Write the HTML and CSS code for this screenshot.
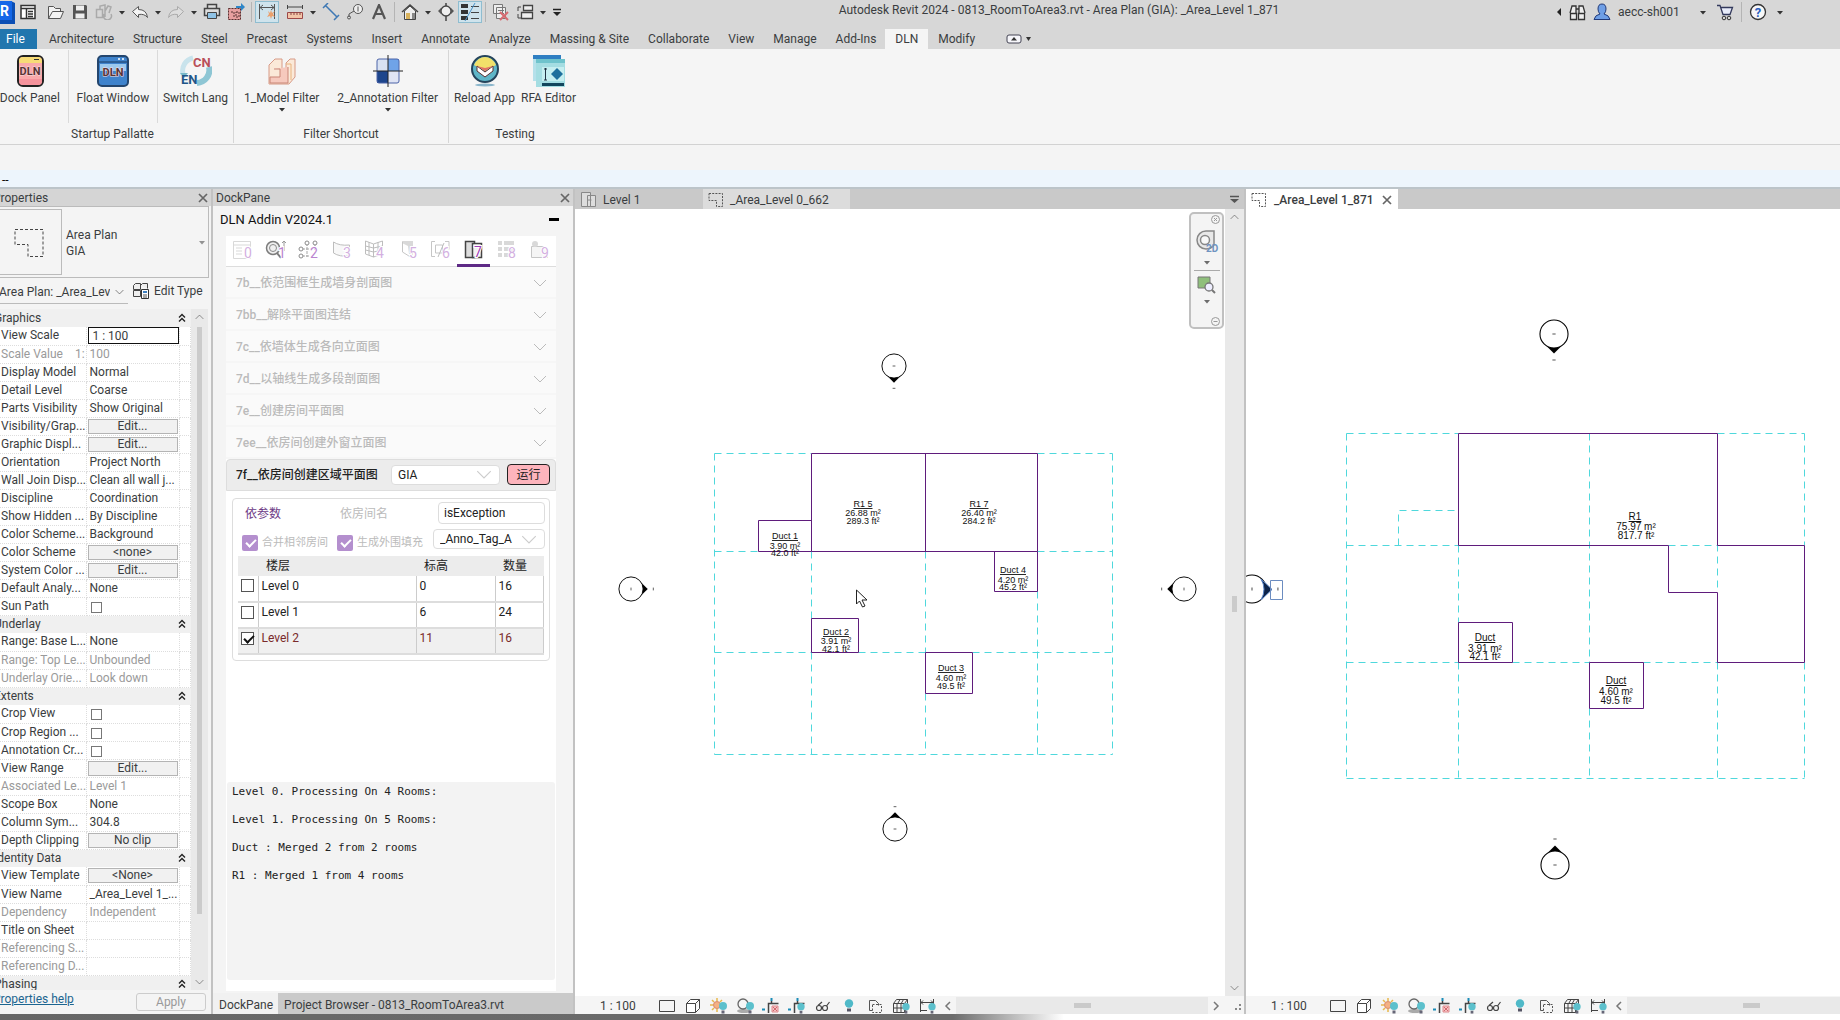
FILE: index.html
```html
<!DOCTYPE html>
<html lang="en">
<head>
    <meta charset="utf-8">
    <title>Autodesk Revit 2024 - 0813_RoomToArea3.rvt</title>
    <link rel="stylesheet" href="styles.css">
</head>
<body>
<!-- shared symbols -->
<svg class="defs" width="0" height="0">
    <symbol id="down" viewBox="0 0 8 5"><path d="M1 1h6L4 4.500z" fill="#333"/></symbol>
    <symbol id="chev" viewBox="0 0 14 8"><path d="M1 1l6 6 6-6" fill="none" stroke="currentColor"/></symbol>
    <symbol id="cross" viewBox="0 0 12 12"><path d="M2 2l8 8M10 2l-8 8" stroke="#666" stroke-width="1.700"/></symbol>
    <symbol id="fold" viewBox="0 0 8 10"><path d="M1 4.500l3-3 3 3M1 8.500l3-3 3 3" fill="none" stroke="#222" stroke-width="1.400"/></symbol>
    <symbol id="areaplan" viewBox="0 0 16 16"><path d="M1 1.500h13.500v13H8.500v-6H1z" fill="none" stroke="#555" stroke-dasharray="2 1.200"/></symbol>
    <symbol id="bulb" viewBox="0 0 8 12"><circle cx="4" cy="4" r="4" fill="#5cc0cc"/><path d="M2.500 8.500h3v3h-3z" fill="#667"/></symbol>
    <symbol id="v-box" viewBox="0 0 18 16"><path d="M1.500 2.500h15v11h-15z" fill="none" stroke="#444"/></symbol>
    <symbol id="v-cube" viewBox="0 0 18 16"><path d="M2.500 5.500h9v9h-9zM2.500 5.500l4-4h9l-4 4M15.500 1.500v9l-4 4" fill="#fff" stroke="#444"/></symbol>
    <symbol id="v-sun" viewBox="0 0 18 16"><path d="M7 0v3M7 11v3M0 7h3M2 2l2 2M2 12l2-2M12 2l-2 2" stroke="#e8b84c" stroke-width="1.500"/><circle cx="7" cy="7" r="3.500" fill="#f4b183" stroke="#d98a6a"/><use href="#bulb" x="9" y="4" width="8" height="12"/></symbol>
    <symbol id="v-shadow" viewBox="0 0 18 16"><ellipse cx="8" cy="13" rx="7" ry="2" fill="#aaa"/><circle cx="7" cy="6" r="5" fill="#f6f6f6" stroke="#666" stroke-width="1.300"/><use href="#bulb" x="10" y="4" width="8" height="12"/></symbol>
    <symbol id="v-crop" viewBox="0 0 18 16"><path d="M9.500 0v3M0 11.500h3" stroke="#1b8cb8" stroke-width="2"/><path d="M6.500 15v-9.500h10M9.500 3v3" fill="none" stroke="#444" stroke-width="1.500"/><path d="M10 8h6v6h-6z" fill="#f6c3c3" stroke="#e08a8e"/><path d="M11 9l4 4M15 9l-4 4" stroke="#d0686e"/></symbol>
    <symbol id="v-region" viewBox="0 0 18 16"><path d="M9.500 0v3M0 11.500h3" stroke="#1b8cb8" stroke-width="2"/><path d="M6.500 15v-9.500h10M9.500 3v3" fill="none" stroke="#444" stroke-width="1.500"/><use href="#bulb" x="9" y="5" width="8" height="11"/></symbol>
    <symbol id="v-glasses" viewBox="0 0 18 16"><g fill="none" stroke="#444" stroke-width="1.200"><circle cx="5" cy="10" r="2.500"/><circle cx="11" cy="10" r="2.500"/><path d="M4 7.500l4-3.500M12.500 8l3-4M7.500 9.500h1"/></g></symbol>
    <symbol id="v-bulb" viewBox="0 0 18 16"><circle cx="9" cy="5.500" r="4.200" fill="#4fb9c8"/><path d="M7 10.500h4v3h-4z" fill="#556"/></symbol>
    <symbol id="v-copy" viewBox="0 0 18 16"><path d="M3.500 12.500v-10h6l3 3v2M3.500 12.500h3" fill="none" stroke="#555"/><path d="M6.500 6.500h9v8h-9z" fill="none" stroke="#555" stroke-dasharray="2 1.500"/></symbol>
    <symbol id="v-grid" viewBox="0 0 18 16"><path d="M1.500 5.500h11v9h-11zM1.500 5.500l3-4h11l-3 4M15.500 1.500v8l-3 5M5 5.500v9M9 5.500v9M1.500 10h11M6 5l2-3.500M9.500 5l2-3.500" fill="none" stroke="#444"/><use href="#bulb" x="10" y="5" width="8" height="11"/></symbol>
    <symbol id="v-dim" viewBox="0 0 18 16"><path d="M2.500 1v13M15.500 1v5M2.500 4.500h13M5 2.500l-2 2 2 2M13 2.500l2 2-2 2M2 12.500h7" fill="none" stroke="#444"/><use href="#bulb" x="10" y="5" width="8" height="11"/></symbol>
    <!-- elevation mark pointing down, the other three are rotated -->
    <symbol id="mark" viewBox="-20 -20 40 50" overflow="visible"><path d="M-9 9L0 18 9 9z" fill="#000"/><circle r="13" fill="#fff" stroke="#000"/><path d="M-1.500 0h3M-1.500 24h3" stroke="#555"/></symbol>
</svg>

<div class="window">
    <header class="titlebar">
        <div class="quick">
            <svg class="logo" width="24" height="26" viewBox="0 0 24 26"><path d="M0 2h19l4 2v21H0z" fill="#0c4fb4"/><path d="M0 2h20v19H0z" fill="#1467e8"/><text x="8" y="17">R</text></svg>
            <button class="tool"><svg width="16" height="16"><path d="M1 1.500h14v13H1zM1 4.500h14M6.500 4v10M8 7.500h5M8 10h5M8 12.500h5" fill="#fff" stroke="#333" stroke-width="1.500"/></svg></button>
            <span class="gap"></span>
            <button class="tool"><svg width="18" height="16"><path d="M1.500 14.500v-12h5l2 2h5v3M1.500 14.500l4-7h11l-3 7z" fill="#f2f2f2" stroke="#555"/></svg></button>
            <button class="tool"><svg width="16" height="16"><path d="M1 1h13l1 1v13H1z" fill="#555"/><path d="M4 1.500h8v5H4zM3.500 9.500h9v5h-9z" fill="#eee"/></svg></button>
            <button class="tool"><svg width="18" height="16"><path d="M1.500 5.500h6v8h-6zM5 5V2l5-1v12M10 7l3-5 3 1-2 6M9 10a4 4 0 1 0 7 0" fill="none" stroke="#aaa" stroke-width="1.500"/></svg></button>
            <svg class="arrow"><use href="#down"/></svg>
            <button class="tool"><svg width="18" height="14"><path d="M1.500 6.500l6-5v3q8 0 9 8q-3-4-9-3v3z" fill="#f4f4f4" stroke="#555"/></svg></button>
            <svg class="arrow"><use href="#down"/></svg>
            <button class="tool"><svg width="18" height="14"><path d="M16.500 6.500l-6-5v3q-8 0-9 8q3-4 9-3v3z" fill="#ddd" stroke="#aaa"/></svg></button>
            <svg class="arrow"><use href="#down"/></svg>
            <button class="tool"><svg width="18" height="18"><path d="M4.500 1.500h9v4h-9zM1.500 5.500h15v7h-15z" fill="#ddd" stroke="#444" stroke-width="1.500"/><path d="M4.500 9.500h9v6h-9z" fill="#8fc3e6" stroke="#444"/></svg></button>
            <button class="tool"><svg width="18" height="18"><path d="M1 5h13v12H1z" fill="#e7a0a0"/><path d="M1.500 5.500h12v11h-12zM4 9h3v5M9 9h3v5H9z" fill="none" stroke="#533" stroke-dasharray="2 1"/><path d="M9 3h5V0l4 4-4 4V5H9z" fill="#2e86c8"/></svg></button>
            <span class="sep"></span>
            <button class="tool on"><svg width="18" height="20"><path d="M1.500 2v15M16.500 2v15M2 5.500h14M5 3L2 5.500 5 8M13 3l3 2.500L13 8" fill="none" stroke="#555"/><path d="M10 9l2 2 1-3 1 3 3-2-2 3 2 3-3-1-1 3-1-3-3 1 2-3z" fill="#eba06c"/></svg></button>
            <span class="gap"></span>
            <button class="tool"><svg width="18" height="16"><path d="M1.500 1v4M16.500 1v4M2 3h14" stroke="#444"/><path d="M1.500 8.500h15v6h-15z" fill="#f3c5a8" stroke="#9d4848"/><path d="M5 8v3M8 8v3M11 8v3M14 8v3" stroke="#844"/></svg></button>
            <svg class="arrow"><use href="#down"/></svg>
            <button class="tool"><svg width="18" height="18"><path d="M3.500 2.500l12 12M1 5l5-5M12 17l5-5" stroke="#3e78b4" stroke-width="1.500"/></svg></button>
            <button class="tool"><svg width="18" height="18"><circle cx="12" cy="6" r="4.500" fill="#eee" stroke="#555"/><path d="M12 3.500v5M8 8l-5 3v3" fill="none" stroke="#555"/><circle cx="3" cy="14.500" r="1.500" fill="none" stroke="#555"/></svg></button>
            <button class="tool"><svg width="16" height="16"><path d="M2 15L8 1l6 14M4.500 10h7" fill="none" stroke="#555" stroke-width="2.200"/></svg></button>
            <span class="sep"></span>
            <button class="tool"><svg width="18" height="18"><path d="M1 9l8-7 8 7" fill="none" stroke="#444" stroke-width="1.500"/><path d="M3.500 8v8.500h11V8L9 3z" fill="#eee" stroke="#444"/><path d="M5 10h4v6H5z" fill="#d8b25c"/><path d="M11 10h3v6h-3z" fill="#888"/></svg></button>
            <svg class="arrow"><use href="#down"/></svg>
            <button class="tool"><svg width="16" height="18"><circle cx="8" cy="8" r="5" fill="#eee" stroke="#444" stroke-width="1.300"/><path d="M8 0v3M8 13v5" stroke="#444" stroke-width="1.500"/><path d="M3 5L0 8l3 3zM13 5l3 3-3 3z" fill="#555"/></svg></button>
            <button class="tool on"><svg width="20" height="18"><path d="M1 3h7M1 9h7M1 15h7" stroke="#333" stroke-width="4"/><path d="M11 3.500h8M11 9.500h8M11 15.500h8" stroke="#444"/><path d="M15 0L5 18" stroke="#4a93c8"/></svg></button>
            <span class="sep"></span>
            <button class="tool"><svg width="18" height="18"><path d="M1.500 1.500h9v9h-9zM4.500 4.500h9v11h-9z" fill="#eee" stroke="#777"/><path d="M6 7.500h6M6 10.500h6" stroke="#777"/><path d="M8 9l8 8M16 9l-8 8" stroke="#d76a70" stroke-width="2"/></svg></button>
            <button class="tool"><svg width="18" height="18"><path d="M7.500 2.500h9v5h-9zM5.500 9.500h11v6h-11z" fill="#eee" stroke="#444" stroke-width="1.300"/><path d="M5 4H2v4M2 11v4h3" fill="none" stroke="#444"/></svg></button>
            <svg class="arrow"><use href="#down"/></svg>
            <svg class="more" width="10" height="9"><path d="M1 1.500h8" stroke="#222" stroke-width="1.500"/><path d="M1 4h8L5 8z" fill="#222"/></svg>
        </div>
        <div class="caption">Autodesk Revit 2024 - 0813_RoomToArea3.rvt - Area Plan (GIA): _Area_Level 1_871</div>
        <div class="account">
            <svg width="6" height="8"><path d="M5 0v8L1 4z" fill="#222"/></svg>
            <svg width="17" height="17"><path d="M1 9l2-7h4v8M16 9l-2-7h-4v8M7 5h3M1.500 9.500h6v6h-6zM9.500 9.500h6v6h-6z" fill="#eee" stroke="#333" stroke-width="1.300"/></svg>
            <svg width="18" height="18"><path d="M9 1q4 0 4 5 0 3-2 5 5 1 6 5.500H1Q2 12 7 11 5 9 5 6q0-5 4-5z" fill="#6f9fe6" stroke="#223a78"/></svg>
            <span class="user">aecc-sh001</span>
            <svg class="arrow"><use href="#down"/></svg>
            <svg width="18" height="17"><path d="M1 1.500h3l3 9h7l2.500-7H5" fill="#e8ecfa" stroke="#33395c" stroke-width="1.300"/><circle cx="8" cy="14" r="1.800" fill="none" stroke="#333"/><circle cx="13" cy="14" r="1.800" fill="none" stroke="#333"/></svg>
            <span class="sep"></span>
            <svg width="18" height="18"><circle cx="9" cy="9" r="7.500" fill="#f8f8f8" stroke="#333" stroke-width="1.300"/><text class="help" x="9" y="14">?</text></svg>
            <svg class="arrow"><use href="#down"/></svg>
        </div>
    </header>

    <nav class="tabs">
        <a class="file" href="#">File</a>
        <a href="#">Architecture</a>
        <a href="#">Structure</a>
        <a href="#">Steel</a>
        <a href="#">Precast</a>
        <a href="#">Systems</a>
        <a href="#">Insert</a>
        <a href="#">Annotate</a>
        <a href="#">Analyze</a>
        <a href="#">Massing &amp; Site</a>
        <a href="#">Collaborate</a>
        <a href="#">View</a>
        <a href="#">Manage</a>
        <a href="#">Add-Ins</a>
        <a class="current" href="#">DLN</a>
        <a href="#">Modify</a>
        <svg class="toggle" width="26" height="10"><rect x="1" y="1" width="14" height="8" rx="2" fill="#f6f6fa" stroke="#445"/><path d="M5 6.500h6L8 3z" fill="#333"/><path d="M20 3h5l-2.500 4z" fill="#333"/></svg>
    </nav>

    <div class="ribbon">
        <section class="group startup">
            <div class="commands">
                <button><svg width="32" height="32"><rect x="4" y="1" width="25" height="30" rx="5" fill="#f9a9ab" stroke="#222" stroke-width="2"/><path d="M5 6q0-4 4-4h15q4 0 4 4v2H5z" fill="#f7dc77"/><path d="M20 4.500h5" stroke="#333"/><path d="M5 24h23v2q0 4-4 4H9q-4 0-4-4z" fill="#f5939c"/><text class="dln" x="16" y="20">DLN</text></svg>Dock Panel</button>
                <button><svg width="32" height="32"><rect x="1" y="1" width="30" height="30" rx="4" fill="#3f83cc" stroke="#24466e" stroke-width="2"/><path d="M2 7h28" stroke="#1d3a5e"/><path d="M3 9h26v7H3z" fill="#9cc9ee"/><circle cx="26" cy="4" r="1" fill="#fff"/><circle cx="22" cy="4" r="1" fill="#fff"/><text class="dln" x="16" y="21">DLN</text></svg>Float Window</button>
                <button><svg width="32" height="32"><path d="M13 3A13 13 0 0 0 3 19" fill="none" stroke="#c9e3ec" stroke-width="5"/><path d="M29 12A13 13 0 0 1 17 28" fill="none" stroke="#8ec6d4" stroke-width="6"/><path d="M0 18l4 5 4-5z" fill="#78b8c8"/><text class="cn" x="13" y="12">CN</text><text class="en" x="1" y="29">EN</text></svg>Switch Lang</button>
            </div>
            <h2>Startup Pallatte</h2>
        </section>
        <section class="group filter">
            <div class="commands">
                <button><svg width="32" height="32"><path d="M3 10l6-6h7v17h4V8l4-4h5v18l-6 7H3z" fill="#fbe9d8" stroke="#d79a86"/><path d="M8 14h6v8H4v6h18V12" fill="#f6c9bd" stroke="#c98577"/><path d="M20 9h5v16" fill="none" stroke="#e8b47f"/></svg>1_Model Filter<svg class="arrow"><use href="#down"/></svg></button>
                <button><svg width="32" height="32"><path d="M5 4h11v12H5z" fill="#d9e2f2"/><path d="M16 4h11v12H16z" fill="#6fa3e8"/><path d="M5 16h11v12H5z" fill="#1d458c"/><path d="M16 16h11v12H16z" fill="#dfe4f4"/><rect x="5" y="4" width="22" height="24" rx="2" fill="none" stroke="#4d64a8"/><path d="M16 0v32M1 16h30" stroke="#222"/></svg>2_Annotation Filter<svg class="arrow"><use href="#down"/></svg></button>
            </div>
            <h2>Filter Shortcut</h2>
        </section>
        <section class="group testing">
            <div class="commands">
                <button><svg width="32" height="32"><ellipse cx="16" cy="30" rx="10" ry="1.500" fill="#8ab6cc"/><circle cx="16" cy="14" r="13" fill="#5fb6c8" stroke="#25445c" stroke-width="2"/><path d="M5 10q4-8 11-8t11 8l-11 6z" fill="#f2e06a"/><path d="M8 11l8 6 8-6v5l-8 6-8-6z" fill="#fff" stroke="#5a3030"/><path d="M8 11l8 5 8-5-8 2z" fill="#e07066"/></svg>Reload App</button>
                <button><svg width="32" height="32"><path d="M0 0h28v26H0z" fill="#b5e0ea"/><path d="M0 0h28v4H0z" fill="#2f7fc2"/><path d="M3 4h29v28H3z" fill="#a4dde2"/><path d="M3 4h29v4H3z" fill="#6fc3cc"/><path d="M9 12h22v14H9z" fill="#c5eef0"/><path d="M12.500 13v12M11 14h3M11 25h3" stroke="#234"/><path d="M24 13l6 6-6 6-6-6z" fill="#1d6f9c"/><path d="M9 28h22v3H9z" fill="#12455c"/></svg>RFA Editor</button>
            </div>
            <h2>Testing</h2>
        </section>
    </div>
    <div class="options"></div>
    <div class="contextbar">--</div>

    <main class="workspace">
        <section class="properties">
            <h3 class="panehead">Properties<svg width="12" height="12"><use href="#cross"/></svg></h3>
            <div class="typebox">
                <div class="thumb"><svg width="30" height="30"><path d="M1 1.500h28v27H14v-12H1z" fill="none" stroke="#444" stroke-dasharray="3 2"/></svg></div>
                <div class="typename">Area Plan<br>GIA</div>
                <svg class="arrow"><use href="#down"/></svg>
            </div>
            <div class="instance">
                <span class="picker"><select aria-label="View"><option>Area Plan: _Area_Level</option></select><svg width="9" height="6"><use href="#chev"/></svg></span>
                <button class="edittype"><svg width="18" height="18"><path d="M1.500 3.500l2-2h5v6h-7zM8.500 3.500l2-2h5v5M1.500 8.500h7v6h-7z" fill="#eee" stroke="#444"/><path d="M9.500 7.500h7v9h-7z" fill="#fff" stroke="#333"/><path d="M11 9h4v2h-4z" fill="#3d7fc0"/><path d="M11 13h4M11 15h4" stroke="#555"/></svg>Edit Type</button>
            </div>
            <div class="gridarea">
                <table class="props">
                    <colgroup><col class="c1"><col class="c2"><col class="c3"></colgroup>
                    <tr class="cat"><th colspan="3">Graphics<svg width="8" height="10"><use href="#fold"/></svg></th></tr>
                    <tr><td><label for="vscale">View Scale</label></td><td class="ctl"><input id="vscale" type="text" value="1 : 100"></td><td></td></tr>
                    <tr class="off"><td>Scale Value &nbsp;&nbsp; 1:</td><td>100</td><td></td></tr>
                    <tr><td>Display Model</td><td>Normal</td><td></td></tr>
                    <tr><td>Detail Level</td><td>Coarse</td><td></td></tr>
                    <tr><td>Parts Visibility</td><td>Show Original</td><td></td></tr>
                    <tr><td>Visibility/Grap...</td><td class="ctl"><button>Edit...</button></td><td></td></tr>
                    <tr><td>Graphic Displ...</td><td class="ctl"><button>Edit...</button></td><td></td></tr>
                    <tr><td>Orientation</td><td>Project North</td><td></td></tr>
                    <tr><td>Wall Join Disp...</td><td>Clean all wall j...</td><td></td></tr>
                    <tr><td>Discipline</td><td>Coordination</td><td></td></tr>
                    <tr><td>Show Hidden ...</td><td>By Discipline</td><td></td></tr>
                    <tr><td>Color Scheme...</td><td>Background</td><td></td></tr>
                    <tr><td>Color Scheme</td><td class="ctl"><button>&lt;none&gt;</button></td><td></td></tr>
                    <tr><td>System Color ...</td><td class="ctl"><button>Edit...</button></td><td></td></tr>
                    <tr><td>Default Analy...</td><td>None</td><td></td></tr>
                    <tr><td><label for="sun">Sun Path</label></td><td class="ctl"><input id="sun" type="checkbox"></td><td></td></tr>
                    <tr class="cat"><th colspan="3">Underlay<svg width="8" height="10"><use href="#fold"/></svg></th></tr>
                    <tr><td>Range: Base L...</td><td>None</td><td></td></tr>
                    <tr class="off"><td>Range: Top Le...</td><td>Unbounded</td><td></td></tr>
                    <tr class="off"><td>Underlay Orie...</td><td>Look down</td><td></td></tr>
                    <tr class="cat"><th colspan="3">Extents<svg width="8" height="10"><use href="#fold"/></svg></th></tr>
                    <tr><td><label for="cropv">Crop View</label></td><td class="ctl"><input id="cropv" type="checkbox"></td><td></td></tr>
                    <tr><td><label for="cropr">Crop Region ...</label></td><td class="ctl"><input id="cropr" type="checkbox"></td><td></td></tr>
                    <tr><td><label for="cropa">Annotation Cr...</label></td><td class="ctl"><input id="cropa" type="checkbox"></td><td></td></tr>
                    <tr><td>View Range</td><td class="ctl"><button>Edit...</button></td><td></td></tr>
                    <tr class="off"><td>Associated Le...</td><td>Level 1</td><td></td></tr>
                    <tr><td>Scope Box</td><td>None</td><td></td></tr>
                    <tr><td>Column Sym...</td><td>304.8</td><td></td></tr>
                    <tr><td>Depth Clipping</td><td class="ctl"><button>No clip</button></td><td></td></tr>
                    <tr class="cat"><th colspan="3">Identity Data<svg width="8" height="10"><use href="#fold"/></svg></th></tr>
                    <tr><td>View Template</td><td class="ctl"><button>&lt;None&gt;</button></td><td></td></tr>
                    <tr><td>View Name</td><td>_Area_Level 1_...</td><td></td></tr>
                    <tr class="off"><td>Dependency</td><td>Independent</td><td></td></tr>
                    <tr><td>Title on Sheet</td><td></td><td></td></tr>
                    <tr class="off"><td>Referencing S...</td><td></td><td></td></tr>
                    <tr class="off"><td>Referencing D...</td><td></td><td></td></tr>
                    <tr class="cat"><th colspan="3">Phasing<svg width="8" height="10"><use href="#fold"/></svg></th></tr>
                </table>
                <div class="vscroll">
                    <svg class="up" width="9" height="6"><use href="#chev"/></svg>
                    <div class="rail"><i class="longthumb"></i></div>
                    <svg width="9" height="6"><use href="#chev"/></svg>
                </div>
            </div>
            <div class="propfoot"><a href="#">Properties help</a><button disabled>Apply</button></div>
        </section>

        <section class="dock">
            <h3 class="panehead">DockPane<svg width="12" height="12"><use href="#cross"/></svg></h3>
            <div class="addin"><span>DLN Addin V2024.1</span><i class="minus"></i></div>
            <div class="sheet">
                <div class="steps">
                    <button><svg width="22" height="20"><path d="M1.500 1.500h17v17h-17zM1.500 5h17M4 8h6M4 11h6M4 14h6" fill="none" stroke="#bbb"/><text x="12" y="18">0</text></svg></button>
                    <button class="mid"><svg width="22" height="20"><circle cx="8" cy="8" r="6.500" fill="#eee" stroke="#666" stroke-width="1.500"/><circle cx="8" cy="8" r="3.500" fill="none" stroke="#777"/><path d="M12 13l4 5" stroke="#666" stroke-width="2"/><path d="M19 1v10M17 3l2-2 2 2" fill="none" stroke="#888"/><text x="13" y="18">1</text></svg></button>
                    <button class="mid"><svg width="22" height="20"><path d="M4 9h14M4 16h8M9 3v14M17 3v8" stroke="#999" stroke-dasharray="3 1"/><g fill="#fff" stroke="#777"><circle cx="9" cy="3" r="2"/><circle cx="17" cy="3" r="2"/><circle cx="3" cy="9" r="2"/><circle cx="3" cy="16" r="2"/></g><text x="12" y="18">2</text></svg></button>
                    <button><svg width="22" height="20"><path d="M2.500 2q6 4 16 3v11q-10 1-16-3z" fill="#f4f4f4" stroke="#888"/><text x="12" y="18">3</text></svg></button>
                    <button><svg width="22" height="20"><path d="M1.500 1l8 3 9-3v13l-9 3-8-3zM9.500 4v13M5 2v13M14 2v13M1.500 6l8 2 9-2M1.500 10l8 2 9-2" fill="none" stroke="#888"/><text x="12" y="18">4</text></svg></button>
                    <button><svg width="22" height="20"><path d="M5 1h11v14l-4-1-1-8-6-3z" fill="#bbb"/><path d="M5.500 2v10l8 5" fill="none" stroke="#999"/><text x="12" y="18">5</text></svg></button>
                    <button><svg width="22" height="20"><path d="M5 1.500H1.500v15H5M15 1.500h4v8M5.500 5h7v8h-7z" fill="none" stroke="#999"/><path d="M14 3l-6 14" stroke="#888"/><text x="12" y="18">6</text></svg></button>
                    <button class="active"><svg width="22" height="20"><path d="M2.500 1.500h9v16h-9z" fill="#ddd" stroke="#444" stroke-width="1.500"/><path d="M9.500 3.500h9v14h-9z" fill="#f2f2f2" stroke="#444" stroke-width="1.500"/><text x="11" y="17">7</text></svg></button>
                    <button><svg width="22" height="20"><path d="M2 3h4M2 9h4M2 15h4M8 3h10M8 9h10M8 15h5" stroke="#bbb" stroke-width="4"/><text x="12" y="18">8</text></svg></button>
                    <button><svg width="22" height="20"><path d="M2.500 6.500h12l4 4v7h-16z" fill="#eee" stroke="#999"/><circle cx="6" cy="4" r="3" fill="#bbb"/><text x="12" y="18">9</text></svg></button>
                </div>
                <ul class="steplist">
                    <li>7b__依范围框生成墙身剖面图<svg width="14" height="8"><use href="#chev"/></svg></li>
                    <li>7bb__解除平面图连结<svg width="14" height="8"><use href="#chev"/></svg></li>
                    <li>7c__依墙体生成各向立面图<svg width="14" height="8"><use href="#chev"/></svg></li>
                    <li>7d__以轴线生成多段剖面图<svg width="14" height="8"><use href="#chev"/></svg></li>
                    <li>7e__创建房间平面图<svg width="14" height="8"><use href="#chev"/></svg></li>
                    <li>7ee__依房间创建外窗立面图<svg width="14" height="8"><use href="#chev"/></svg></li>
                </ul>
                <div class="open">
                    <strong>7f__依房间创建区域平面图</strong>
                    <span class="picker gia"><select aria-label="Area scheme"><option>GIA</option></select><svg width="16" height="9"><use href="#chev"/></svg></span>
                    <button class="run">运行</button>
                </div>
                <div class="card">
                    <div class="line">
                        <span class="mode picked">依参数</span>
                        <span class="mode">依房间名</span>
                        <input class="param" type="text" value="isException" aria-label="Parameter">
                    </div>
                    <div class="line">
                        <label><input type="checkbox" checked>合并相邻房间</label>
                        <label><input type="checkbox" checked>生成外围填充</label>
                        <span class="picker tag"><select aria-label="Tag"><option>_Anno_Tag_A</option></select><svg width="16" height="9"><use href="#chev"/></svg></span>
                    </div>
                    <table class="levels">
                        <colgroup><col class="l1"><col class="l2"><col class="l3"><col class="l4"></colgroup>
                        <tr><th></th><th>楼层</th><th>标高</th><th>数量</th></tr>
                        <tr><td><input type="checkbox" aria-label="Level 0"></td><td>Level 0</td><td>0</td><td>16</td></tr>
                        <tr><td><input type="checkbox" aria-label="Level 1"></td><td>Level 1</td><td>6</td><td>24</td></tr>
                        <tr class="picked"><td><input type="checkbox" aria-label="Level 2" checked></td><td>Level 2</td><td>11</td><td>16</td></tr>
                    </table>
                </div>
<pre class="log">Level 0. Processing On 4 Rooms:

Level 1. Processing On 5 Rooms:

Duct : Merged 2 from 2 rooms

R1 : Merged 1 from 4 rooms</pre>
            </div>
            <div class="docktabs"><a class="current" href="#">DockPane</a><a href="#">Project Browser - 0813_RoomToArea3.rvt</a></div>
        </section>

        <section class="view first">
            <div class="viewtabs">
                <a class="level" href="#"><svg width="17" height="17"><path d="M1.500 1.500h9v14h-9zM7.500 4.500h8v11h-8z" fill="#ddd" stroke="#888"/><path d="M7.500 9h4" stroke="#888"/></svg>Level 1</a>
                <a class="area" href="#"><svg width="16" height="16"><use href="#areaplan"/></svg>_Area_Level 0_662</a>
                <svg class="more" width="9" height="9"><path d="M0 1.500h9" stroke="#555" stroke-width="1.500"/><path d="M0 4h9l-4.500 4z" fill="#555"/></svg>
            </div>
            <div class="canvas">
                <svg class="drawing">
                    <!-- drawn in window coordinates -->
                    <g transform="translate(-575,-209)">
                        <path class="sep-line" d="M714.500 453.500h97M1037.500 453.500h75M714.500 453.500v301M1112.500 453.500v301M714.500 551.500h44M1037.500 551.500h75M811.500 551.500v67M811.500 652.500v102M925.500 551.500v101M925.500 693.500v61M1037.500 591.500v163M714.500 652.500h97M858.500 652.500h67M972.500 652.500h140M714.500 754.500h398"/>
                        <path class="room" d="M811.500 453.500h226v98h-226zM925.500 453.500v98M758.500 551.500v-31h53M758.500 551.500h53M994.500 551.500v40h43v-40M811.500 652.500v-34h47v34zM925.500 652.500h47v41h-47z"/>
                        <g class="tag9">
                            <text class="name" x="863" y="507">R1 5</text><text x="863" y="516">26.88 m²</text><text x="863" y="524">289.3 ft²</text>
                            <text class="name" x="979" y="507">R1 7</text><text x="979" y="516">26.40 m²</text><text x="979" y="524">284.2 ft²</text>
                            <text class="name" x="785" y="539">Duct 1</text><text x="785" y="549">3.90 m²</text><text x="785" y="556">42.0 ft²</text>
                            <text class="name" x="1013" y="573">Duct 4</text><text x="1013" y="583">4.20 m²</text><text x="1013" y="590">45.2 ft²</text>
                            <text class="name" x="836" y="635">Duct 2</text><text x="836" y="644">3.91 m²</text><text x="836" y="652">42.1 ft²</text>
                            <text class="name" x="951" y="671">Duct 3</text><text x="951" y="681">4.60 m²</text><text x="951" y="689">49.5 ft²</text>
                        </g>
                        <g transform="translate(894,366) scale(.93)"><use href="#mark" x="-20" y="-20" width="40" height="50"/></g>
                        <g transform="translate(631,589) rotate(-90) scale(.93)"><use href="#mark" x="-20" y="-20" width="40" height="50"/></g>
                        <g transform="translate(1184,589) rotate(90) scale(.93)"><use href="#mark" x="-20" y="-20" width="40" height="50"/></g>
                        <g transform="translate(895,829) rotate(180) scale(.93)"><use href="#mark" x="-20" y="-20" width="40" height="50"/></g>
                        <path d="M856.500 590v14l3-3 3 6 2.500-1-3-6h5z" fill="#fff" stroke="#222"/>
                    </g>
                </svg>
                <div class="navbar">
                    <svg class="end" width="9" height="9"><circle cx="4.500" cy="4.500" r="4" fill="none" stroke="#999"/><path d="M3 3l3 3M6 3l-3 3" stroke="#999"/></svg>
                    <svg width="26" height="26"><path d="M12 2h8v14q-3 4-8 4a9 9 0 0 1 0-18z" fill="#e8e8e8" stroke="#888" stroke-width="1.500"/><circle cx="11" cy="11" r="4.500" fill="#f8f8f8" stroke="#888" stroke-width="1.500"/><text x="12" y="23">2D</text></svg>
                    <svg class="arrow"><use href="#down"/></svg>
                    <i class="rule"></i>
                    <svg width="20" height="18"><path d="M1 1h12v11H1z" fill="#8fbf7c" stroke="#777"/><circle cx="12" cy="11" r="4" fill="#eef" stroke="#777" stroke-width="1.300"/><path d="M15 14l3 3" stroke="#777" stroke-width="2"/></svg>
                    <svg class="arrow"><use href="#down"/></svg>
                    <svg class="end last" width="9" height="9"><circle cx="4.500" cy="4.500" r="4" fill="none" stroke="#999"/><path d="M2.500 4.500h4" stroke="#999"/></svg>
                </div>
                <div class="vscroll">
                    <svg class="up" width="9" height="6"><use href="#chev"/></svg>
                    <div class="rail mid"><i class="grip"></i></div>
                    <svg width="9" height="6"><use href="#chev"/></svg>
                </div>
            </div>
            <div class="viewbar">
                <span class="scale">1 : 100</span>
                <svg><use href="#v-box"/></svg><svg><use href="#v-cube"/></svg><svg><use href="#v-sun"/></svg><svg><use href="#v-shadow"/></svg><svg><use href="#v-crop"/></svg><svg><use href="#v-region"/></svg><svg><use href="#v-glasses"/></svg><svg><use href="#v-bulb"/></svg><svg><use href="#v-copy"/></svg><svg><use href="#v-grid"/></svg><svg><use href="#v-dim"/></svg>
                <svg class="prev" viewBox="0 0 8 12"><path d="M6 2L2 6l4 4" fill="none" stroke="#777" stroke-width="1.500"/></svg>
                <div class="hrail"><i></i></div>
                <svg class="prev" viewBox="0 0 8 12"><path d="M2 2l4 4-4 4" fill="none" stroke="#777" stroke-width="1.500"/></svg>
                <svg class="corner" viewBox="0 0 12 16"><path d="M7 6h2v2H7zM3 10h2v2H3zM7 10h2v2H7z" fill="#888"/></svg>
            </div>
        </section>

        <section class="view second">
            <div class="viewtabs">
                <a class="front" href="#"><svg width="16" height="16"><use href="#areaplan"/></svg>_Area_Level 1_871<svg width="12" height="12"><use href="#cross"/></svg></a>
            </div>
            <div class="canvas">
                <svg class="drawing">
                    <g transform="translate(-1246,-209)">
                        <path class="sep-line" d="M1346.500 433.500h112M1717.500 433.500h87M1346.500 433.500v345M1804.500 433.500v112M1804.500 662.500v116M1398.500 545.500v-35h60M1346.500 545.500h112M1668.500 545.500h49v47M1458.500 545.500v77M1458.500 662.500v116M1589.500 433.500v229M1589.500 708.500v70M1717.500 662.500v116M1346.500 662.500h112M1512.500 662.500h77M1643.500 662.500h74M1346.500 778.500h458"/>
                        <path class="room" d="M1458.500 433.500h259v112h87v117h-87v-70h-49v-47h-210zM1458.500 622.500h54v40h-54zM1589.500 662.500h54v46h-54z"/>
                        <g class="tag10">
                            <text class="name" x="1635" y="520">R1</text><text x="1636" y="530">75.97 m²</text><text x="1636" y="539">817.7 ft²</text>
                            <text class="name" x="1485" y="641">Duct</text><text x="1485" y="652">3.91 m²</text><text x="1485" y="660">42.1 ft²</text>
                            <text class="name" x="1616" y="684">Duct</text><text x="1616" y="695">4.60 m²</text><text x="1616" y="704">49.5 ft²</text>
                        </g>
                        <g transform="translate(1554,334) scale(1.080)"><use href="#mark" x="-20" y="-20" width="40" height="50"/></g>
                        <g transform="translate(1555,865) rotate(180) scale(1.080)"><use href="#mark" x="-20" y="-20" width="40" height="50"/></g>
                        <g transform="translate(1252,589) rotate(-90) scale(1.080)"><use href="#mark" x="-20" y="-20" width="40" height="50"/></g>
                        <path d="M1261 579q6 10 0 21l11-10.500z" fill="#0c2348" stroke="#5b86c8"/>
                        <path d="M1270.500 580.500h12v19h-12z" fill="none" stroke="#6b8cc0"/>
                    </g>
                </svg>
            </div>
            <div class="viewbar">
                <span class="scale">1 : 100</span>
                <svg><use href="#v-box"/></svg><svg><use href="#v-cube"/></svg><svg><use href="#v-sun"/></svg><svg><use href="#v-shadow"/></svg><svg><use href="#v-crop"/></svg><svg><use href="#v-region"/></svg><svg><use href="#v-glasses"/></svg><svg><use href="#v-bulb"/></svg><svg><use href="#v-copy"/></svg><svg><use href="#v-grid"/></svg><svg><use href="#v-dim"/></svg>
                <svg class="prev" viewBox="0 0 8 12"><path d="M6 2L2 6l4 4" fill="none" stroke="#777" stroke-width="1.500"/></svg>
                <div class="hrail"><i></i></div>
            </div>
        </section>
    </main>
    <footer class="edge"></footer>
</div>
</body>
</html>
```

FILE: styles.css
```css
*
{
	box-sizing: border-box;
}

body
{
	margin: 0;
	overflow: hidden;
	font: 12px/16px Roboto, "Noto Sans CJK SC", sans-serif;
	color: #3a3d40;
}

button, input, select
{
	font: inherit;
	color: inherit;
	margin: 0;
	padding: 0;
	border: 0;
	background: none;
	border-radius: 0;
}

select, input[type="checkbox"]
{
	appearance: none;
}

a
{
	color: inherit;
	text-decoration: none;
}

h2, h3, ul, pre
{
	margin: 0;
	padding: 0;
	font-size: 12px;
	font-weight: normal;
}

svg
{
	flex: none;
	display: block;
}

.defs
{
	position: absolute;
}

/* the window hangs a little over the left screen edge */
.window
{
	margin-left: -8px;
	height: 100vh;
	display: flex;
	flex-direction: column;
	background: #f4f4f4;
}

/* title bar */
.titlebar
{
	display: flex;
	height: 29px;
	background: #d7d7d7;
}

.quick, .account
{
	display: flex;
	align-items: center;
	height: 24px;
}

.logo text
{
	font: bold 14px Roboto, sans-serif;
	fill: #fff;
}

.tool
{
	width: 24px;
	height: 22px;
	display: flex;
	align-items: center;
	justify-content: center;
}

.tool.on
{
	background: #cfe3ec;
	border: 1px solid #8fbdd0;
}

.arrow
{
	width: 12px;
	height: 5px;
}

.gap
{
	width: 4px;
}

.sep
{
	width: 1px;
	height: 20px;
	margin: 0 3px;
	background: #b4b4b4;
}

.quick .more
{
	margin-left: 3px;
}

.caption
{
	flex: 1;
	text-align: center;
	padding-top: 2px;
}

.account
{
	width: 284px;
	gap: 7px;
}

.account .user
{
	width: 72px;
}

.account .sep
{
	margin: 0;
}

.help
{
	font: bold 13px Roboto, sans-serif;
	fill: #2c5fc0;
	text-anchor: middle;
}

/* ribbon tabs */
.tabs
{
	display: flex;
	height: 20px;
	background: #d7d7d7;
	align-items: center;
}

.tabs a
{
	padding: 2px 9px 2px 10px;
	height: 20px;
}

.tabs .file
{
	width: 45px;
	margin-right: 2px;
	padding-left: 14px;
	background: #2176ae;
	color: #fff;
}

.tabs .current
{
	padding-right: 10px;
	background: #f5f5f5;
}

.tabs .toggle
{
	margin-left: 22px;
}

/* ribbon */
.ribbon
{
	display: flex;
	height: 96px;
	background: #f5f5f5;
	border-bottom: 1px solid #d2d2d2;
}

.group
{
	display: flex;
	flex-direction: column;
	margin: 1px 0;
	border-right: 1px solid #d6d6d6;
}

.group h2
{
	text-align: center;
}

.commands
{
	display: flex;
	justify-content: center;
	height: 76px;
}

.commands button
{
	display: flex;
	flex-direction: column;
	align-items: center;
	padding-top: 5px;
}

.commands button > svg:first-child
{
	margin-bottom: 3px;
}

.commands .arrow
{
	margin-top: 1px;
}

.startup
{
	width: 242px;
}

.startup button
{
	flex: 1 1 auto;
	height: 73px;
}

.startup button + button
{
	border-left: 1px solid #dadada;
}

.startup button:last-child
{
	flex: 0 0 76px;
}

.filter
{
	width: 215px;
}

.filter .commands
{
	gap: 18px;
}

.testing
{
	width: 132px;
	border: 0;
}

.testing .commands
{
	gap: 6px;
}

.dln
{
	font: bold 11px Roboto, sans-serif;
	fill: #5a3336;
	stroke: #f6dede;
	paint-order: stroke;
	text-anchor: middle;
}

.cn, .en
{
	font: bold 13px Roboto, sans-serif;
	fill: #b9505a;
}

.en
{
	fill: #1f5688;
}

.options
{
	height: 25px;
	background: #f4f4f4;
}

.contextbar
{
	height: 19px;
	padding: 2px 10px 0;
	background: #edf5fc;
	border-bottom: 2px solid #bcc4c9;
	color: #111;
}

/* panes */
.workspace
{
	flex: 1;
	min-height: 0;
	display: grid;
	grid-template-columns: 221px 362px 671px 1fr;
}

.workspace > section
{
	display: flex;
	flex-direction: column;
	min-width: 0;
	min-height: 0;
	border-right: 2px solid #c2c2c2;
}

.workspace > .second
{
	border-right: 0;
	overflow: hidden;
}

.panehead
{
	display: flex;
	justify-content: space-between;
	align-items: center;
	height: 17px;
	padding: 1px 2px 0 3px;
	background: #d5d5d5;
}

.picker
{
	display: grid;
	align-items: center;
}

.picker select, .picker svg
{
	grid-area: 1 / 1;
}

.picker svg
{
	justify-self: end;
	pointer-events: none;
	color: #ccc;
}

/* properties */
.properties .panehead
{
	padding-left: 1px;
}

.typebox
{
	display: flex;
	align-items: center;
	height: 72px;
	margin-right: 2px;
	padding: 2px 0;
	border: 1px solid #bbb;
}

.thumb
{
	width: 69px;
	height: 66px;
	padding: 18px 0 0 21px;
	border: 1px solid #bbb;
	border-left: 0;
}

.typename
{
	flex: 1;
	padding: 2px 0 0 4px;
}

.typebox .arrow
{
	opacity: .5;
}

.instance
{
	display: flex;
	gap: 4px;
	height: 31px;
	padding-top: 2px;
}

.instance .picker
{
	width: 136px;
	height: 24px;
	padding: 0 4px 0 7px;
	border-bottom: 1px solid #bbb;
}

.instance select
{
	width: 111px;
	overflow: hidden;
}

.instance .picker svg
{
	color: #444;
}

.edittype
{
	display: flex;
	align-items: center;
	gap: 4px;
	height: 22px;
}

.gridarea
{
	display: flex;
	flex: 1;
	min-height: 0;
	overflow: hidden;
}

.props
{
	width: 199px;
	table-layout: fixed;
	border-collapse: collapse;
	background: #fff;
}

.c1
{
	width: 94px;
}

.c2
{
	width: 93px;
}

.props tr
{
	height: 18px;
}

.props td, .props th
{
	height: 18px;
	padding: 0;
	line-height: 16px;
	white-space: nowrap;
	overflow: hidden;
}

.props td
{
	padding: 0 0 1px 3px;
	border-bottom: 1px dotted #ddd;
	border-right: 1px dotted #ddd;
}

.props td:first-child
{
	padding-left: 9px;
}

.props td.ctl
{
	padding: 0 1px;
}

.props th
{
	padding: 0 5px 0 2px;
	background: #f0f0f0;
	font-weight: normal;
	text-align: left;
}

.props th svg
{
	float: right;
	margin-top: 3px;
}

.props .off
{
	color: #9a9a9a;
}

.props button
{
	display: block;
	width: 90px;
	height: 15px;
	line-height: 13px;
	background: #f1f1f1;
	border: 1px solid #b4b4b4;
}

.props input[type="text"]
{
	display: block;
	width: 91px;
	height: 17px;
	padding-left: 4px;
	border: 1px solid #111;
}

.props input[type="checkbox"]
{
	display: block;
	width: 11px;
	height: 11px;
	margin: 2px 0 0 3px;
	border: 1px solid #777;
}

.vscroll
{
	display: flex;
	flex-direction: column;
	align-items: center;
	width: 17px;
	padding: 5px 0;
	background: #e9e9e9;
	color: #555;
}

.vscroll .up
{
	transform: scaleY(-1);
}

.rail
{
	flex: 1;
	padding-top: 7px;
}

.rail.mid
{
	display: flex;
	align-items: center;
	padding: 2px 0 0;
}

.longthumb, .grip
{
	display: block;
	width: 5px;
	height: 90%;
	background: #cbcbcb;
}

.grip
{
	height: 16px;
}

.propfoot
{
	display: flex;
	align-items: flex-start;
	justify-content: space-between;
	height: 24px;
	padding: 1px 5px 0 1px;
}

.propfoot a
{
	color: #1c6590;
	text-decoration: underline;
}

.propfoot button
{
	width: 70px;
	height: 18px;
	margin-top: 2px;
	border: 1px solid #ccc;
	border-radius: 3px;
	color: #999;
}

/* dock pane */
.addin
{
	display: flex;
	justify-content: space-between;
	align-items: center;
	height: 30px;
	padding: 0 14px 3px 7px;
	font-size: 13px;
	color: #111;
}

.minus
{
	width: 10px;
	height: 3px;
	background: #000;
}

.sheet
{
	flex: 1;
	min-height: 0;
	display: flex;
	flex-direction: column;
	margin: 0 17px 2px 13px;
	padding-bottom: 11px;
	background: #fff;
}

.steps
{
	display: flex;
	height: 31px;
	border-bottom: 1px solid #ddd;
}

.steps button
{
	flex: 1;
	height: 31px;
	padding-left: 6px;
	border-bottom: 3px solid transparent;
}

.steps svg
{
	opacity: .55;
}

.steps .mid svg
{
	opacity: .85;
}

.steps .active
{
	border-color: #5e2a86;
}

.steps .active svg
{
	opacity: 1;
}

.steps text
{
	font: 14px Roboto, sans-serif;
	fill: #b070c8;
	stroke: #fff;
	stroke-width: 2px;
	paint-order: stroke;
}

.steps .active text
{
	fill: #a040b8;
}

.steplist
{
	list-style: none;
}

.steplist li
{
	display: flex;
	align-items: center;
	justify-content: space-between;
	height: 32px;
	padding: 1px 9px 0 10px;
	background: #fafafa;
	border-bottom: 2px solid #f6f6f6;
	color: #bbb;
	font-weight: 500;
}

.open
{
	display: flex;
	align-items: center;
	height: 32px;
	padding: 0 0 1px 9px;
	background: #ececec;
	border: 1px solid #ddd;
	border-radius: 4px 4px 0 0;
	color: #222;
}

.open strong
{
	width: 155px;
	font-weight: 500;
	white-space: nowrap;
}

.gia, .tag
{
	height: 20px;
	padding: 0 7px 0 6px;
	background: #fff;
	border: 1px solid #ddd;
	border-radius: 4px;
}

.gia
{
	width: 109px;
}

.run
{
	width: 43px;
	height: 21px;
	margin-left: 7px;
	background: #fdb4bc;
	border: 1px solid #222;
	border-radius: 4px;
}

.card
{
	margin: 7px 6px 0;
	padding: 3px 4px 5px 5px;
	border: 1px solid #ddd;
	border-radius: 4px;
}

.line
{
	display: flex;
	align-items: center;
	height: 27px;
	color: #bbb;
}

.line:first-child
{
	align-items: flex-start;
	padding: 0 0 0 7px;
}

.mode
{
	width: 95px;
	padding-top: 4px;
}

.mode.picked
{
	color: #6d3a86;
}

.param
{
	width: 107px;
	height: 22px;
	margin-left: auto;
	padding-left: 5px;
	border: 1px solid #ddd;
	border-radius: 4px;
	color: #222;
}

.line label
{
	display: flex;
	align-items: center;
	gap: 4px;
	width: 95px;
	padding-left: 4px;
	font-size: 11px;
	white-space: nowrap;
}

.line input[type="checkbox"]
{
	width: 16px;
	height: 16px;
	background: #b48fce;
	border-radius: 2px;
	flex: none;
}

input[type="checkbox"]:checked::after
{
	content: "";
	display: block;
	width: 8px;
	height: 4px;
	margin: 4px 0 0 4px;
	border: solid #fff;
	border-width: 0 0 2px 2px;
	transform: rotate(-45deg);
}

.tag
{
	width: 112px;
	margin-left: auto;
	margin-bottom: 7px;
	color: #222;
}

.levels
{
	width: 306px;
	table-layout: fixed;
	border-collapse: collapse;
	color: #222;
}

.l1 { width: 20px; }
.l2 { width: 158px; }
.l3 { width: 79px; }

.levels th
{
	height: 20px;
	padding: 0 8px;
	background: #ececec;
	font-weight: normal;
	text-align: left;
}

.levels td
{
	height: 26px;
	padding: 0 0 6px 3px;
	border-right: 1px solid #ccc;
	border-bottom: 2px solid #ddd;
}

.levels .picked
{
	background: #f0f0f0;
	color: #7a2a2a;
}

.levels input
{
	display: block;
	width: 13px;
	height: 13px;
	border: 1px solid #555;
	background: #fff;
}

.levels input:checked::after
{
	margin: 2px 0 0 2px;
	border-color: #111;
}

.log
{
	height: 198px;
	margin: auto 1px 0;
	padding: 3px 5px 0;
	background: #f3f3f3;
	border-radius: 3px;
	font: 11px/14px "DejaVu Sans Mono", monospace;
	color: #222;
}

.docktabs
{
	display: flex;
	height: 21px;
	background: #cacaca;
}

.docktabs a
{
	padding: 4px 5px 0 6px;
}

.docktabs .current
{
	background: #f1f1f1;
}

/* drawing views */
.viewtabs
{
	display: flex;
	align-items: center;
	height: 20px;
	background: #c9c9c9;
}

.viewtabs a
{
	display: flex;
	align-items: center;
	gap: 6px;
	height: 20px;
	padding: 1px 0 0 5px;
}

.viewtabs .level
{
	width: 128px;
}

.viewtabs .area
{
	width: 147px;
	background: #dcdcdc;
}

.viewtabs .more
{
	margin: 0 5px 0 auto;
}

.viewtabs .front
{
	width: 152px;
	gap: 7px;
	background: #fff;
	font-weight: 500;
}

.canvas
{
	flex: 1;
	min-height: 0;
	display: flex;
	position: relative;
	background: #fff;
}

.drawing
{
	flex: 1;
	min-width: 0;
	height: 100%;
}

.room
{
	fill: none;
	stroke: #5f1c7c;
}

.sep-line
{
	fill: none;
	stroke: #4fd8dc;
	stroke-dasharray: 7 5;
}

.tag9, .tag10
{
	font: 9px "Liberation Sans", sans-serif;
	fill: #111;
	text-anchor: middle;
}

.tag10
{
	font-size: 10px;
}

.name
{
	text-decoration: underline;
}

.navbar
{
	position: absolute;
	top: 3px;
	right: 20px;
	width: 35px;
	height: 117px;
	display: flex;
	flex-direction: column;
	align-items: center;
	gap: 5px;
	padding: 1px 2px;
	background: #f4f4f4;
	border: 2px solid #c0c0c0;
	border-radius: 5px;
}

.navbar text
{
	font: bold 10px Roboto, sans-serif;
	fill: #6f93c0;
}

.navbar .end
{
	align-self: flex-end;
}

.navbar .last
{
	margin-top: auto;
}

.navbar .arrow
{
	opacity: .7;
}

.rule
{
	width: 26px;
	height: 1px;
	background: #aaa;
}

.first .vscroll
{
	width: 19px;
}

.viewbar
{
	display: flex;
	align-items: center;
	gap: 8px;
	height: 18px;
	padding: 1px 0 0 25px;
	background: #f5f5f5;
}

.viewbar svg
{
	width: 18px;
	height: 16px;
}

.scale
{
	width: 50px;
}

.viewbar .prev
{
	width: 8px;
	height: 12px;
}

.viewbar .corner
{
	width: 12px;
	margin-left: 4px;
}

.hrail
{
	flex: 1;
	display: flex;
	align-items: center;
	justify-content: center;
	height: 18px;
	margin: 0 -4px;
	background: #e9e9e9;
}

/* runs on past the right screen edge */
.second .hrail
{
	margin-right: -36px;
}

.hrail i
{
	width: 17px;
	height: 5px;
	background: #cacaca;
}

.edge
{
	height: 6px;
	background: linear-gradient(to right, #666 0, #6c6c6c 52%, #fff 58%);
}
```
